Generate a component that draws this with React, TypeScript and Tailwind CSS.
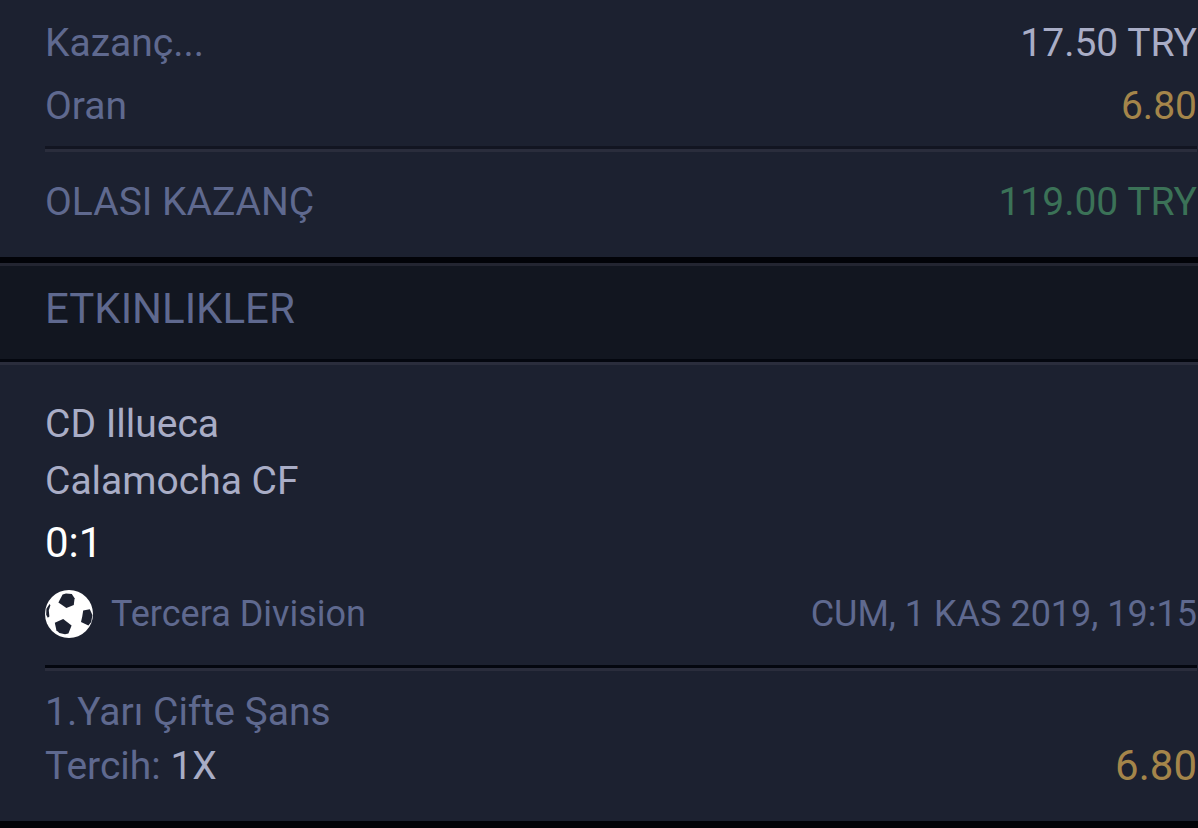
import React from 'react';

function Divider({ dark }: { dark?: boolean }) {
    return <div className={`border-t-[3px] border-b-[3px] border-b-[#2a2d3c] ${dark ? 'border-t-[#04070f]' : 'border-t-[#121521]'}`} />;
}

function Row({ label, value, color }: { label: string; value: string; color: string }) {
    return (
        <div className="flex justify-between text-[39px] leading-[63px]">
            <dt>{label}</dt>
            <dd className={color}>{value}</dd>
        </div>
    );
}

function BallIcon() {
    return (
        <svg viewBox="0 0 48 48" className="size-12 shrink-0" aria-hidden="true">
            <circle cx="24" cy="24" r="24" fill="#fff" />
            <g fill="#1c2130">
                <path d="M17.6 4.4 21 3.4 26.8 4 29.6 8.2 28.8 15 21.4 18 13.4 12.6Z" />
                <path d="M38.2 20.6 44.8 19.2 47.4 25 46.2 32 43.4 35.6 36 32 37.2 26.8Z" />
                <path d="M18.2 29 26.6 35.4 23.4 43.4 20 44.2 14.4 43 11.4 40.2 9.8 32.8Z" />
                <path d="M4.6 14 5.4 15.2 3.8 20.4 4.4 26.4 2.8 27.8 1.2 24.8 1.4 18.8Z" />
            </g>
        </svg>
    );
}

function App() {
    return (
        <main className="bg-[#1c2130] text-[#5f698f] font-[Roboto,'Noto_Sans',sans-serif]">
            <dl className="pl-[45px] pr-px pt-3 pb-[23px]">
                <Row label="Kazanç..." value="17.50 TRY" color="text-[#a9adc6]" />
                <Row label="Oran" value="6.80" color="text-[#a4854a]" />
                <div className="pt-2 pb-[19px]">
                    <Divider />
                </div>
                <Row label="OLASI KAZANÇ" value="119.00 TRY" color="text-[#3b7257]" />
            </dl>

            <div className="border-t-[6px] border-[#020308]">
                <h2 className="border-t-[3px] border-[#232531] bg-[#121620] pl-[45px] pt-[11px] pb-[19px] text-[42px] leading-[63px]">
                    ETKINLIKLER
                </h2>
                <Divider dark />
            </div>

            <section className="pl-[45px] pr-px pt-[31px] pb-7">
                <div className="text-[39px] leading-[57px] text-[#a9adc6]">
                    <div>CD Illueca</div>
                    <div>Calamocha CF</div>
                </div>
                <div className="text-[42px] leading-[66px] text-white">0:1</div>
                <div className="flex items-center pt-[14px] pb-[27px] text-[36px] leading-[48px]">
                    <BallIcon />
                    <span className="ml-[18px]">Tercera Division</span>
                    <time className="ml-auto" dateTime="2019-11-01T19:15">CUM, 1 KAS 2019, 19:15</time>
                </div>
                <Divider dark />
                <div className="pt-[14px] text-[39px] leading-[54px]">
                    <div>1.Yarı Çifte Şans</div>
                    <div className="flex justify-between">
                        <div>Tercih: <span className="text-[#a9adc6]">1X</span></div>
                        <div className="text-[42px] text-[#a4854a]">6.80</div>
                    </div>
                </div>
            </section>
            <div className="h-[7px] bg-[#020308]" />
        </main>
    );
}

export default App;
